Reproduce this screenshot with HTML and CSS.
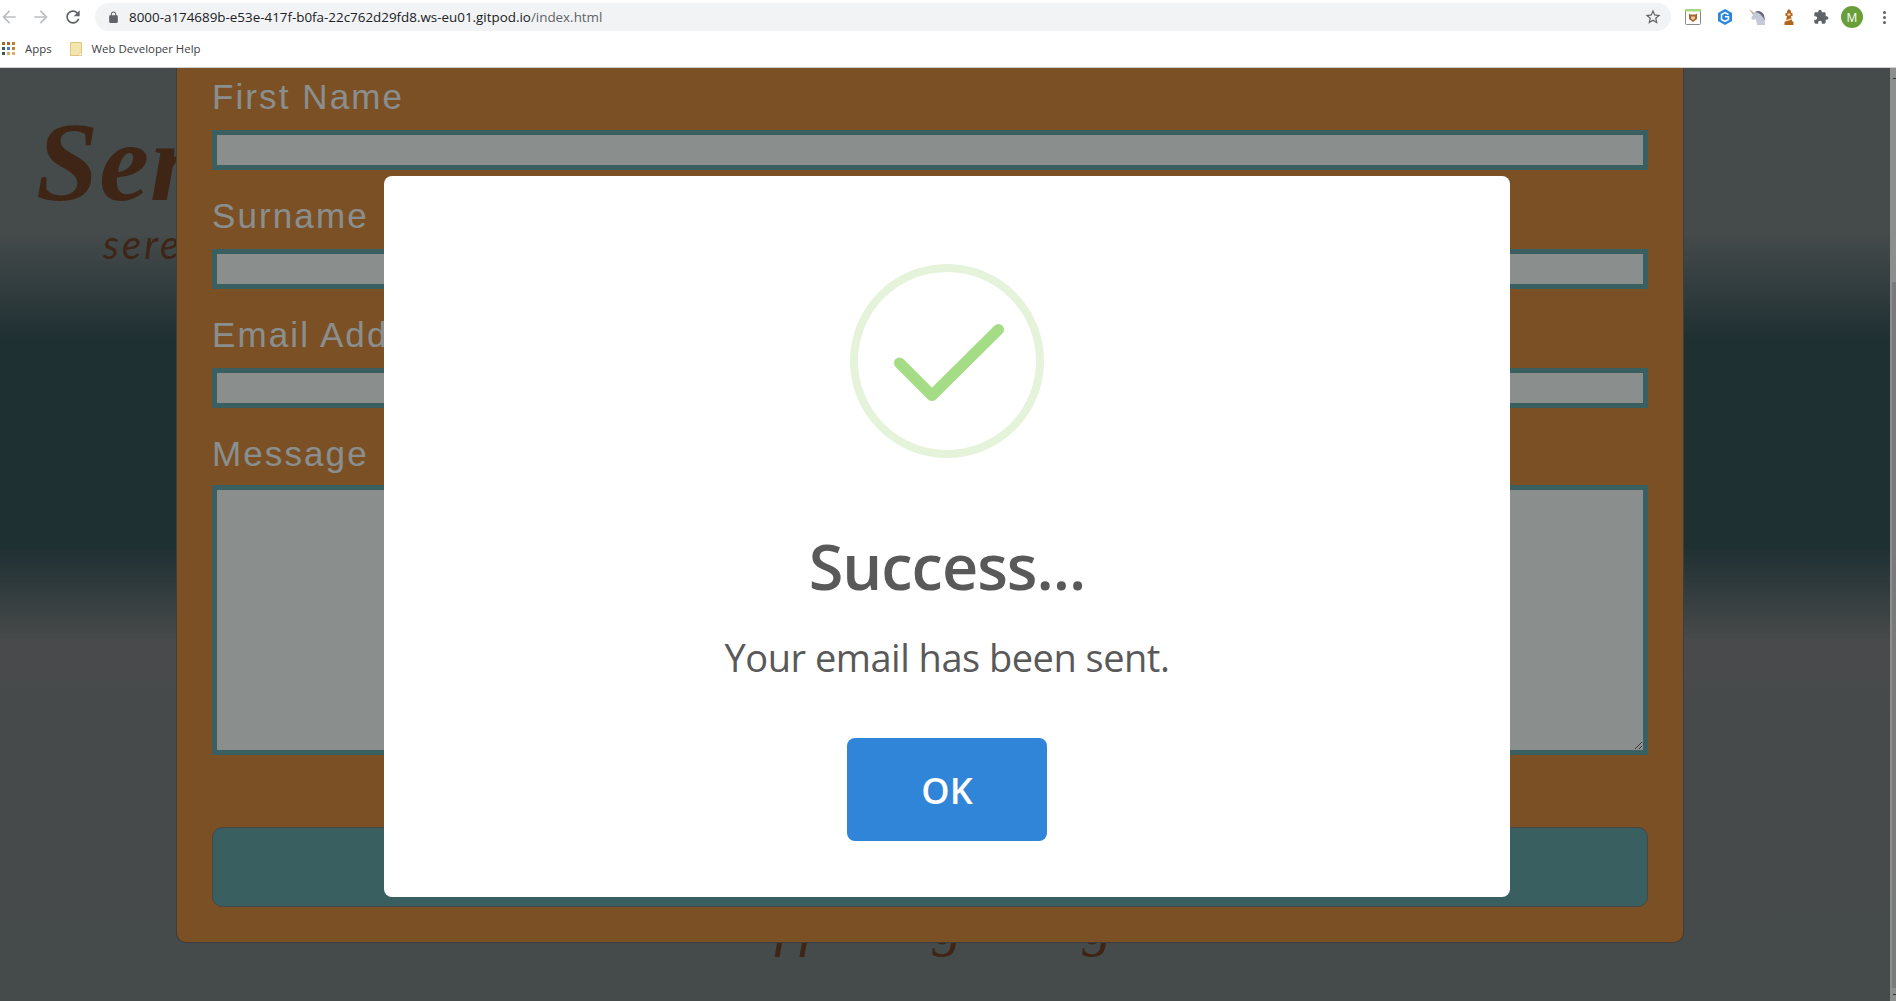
FILE: index.html
```html
<!DOCTYPE html>
<html lang="en">
<head>
<meta charset="utf-8">
<title>Send a message</title>
<link rel="stylesheet" href="styles.css">
</head>
<body>
<header class="chrome">
  <div class="toolbar">
    <svg class="nav nav-off nav-back" viewBox="0 0 24 24"><path d="M20 11H7.830l5.590-5.590L12 4l-8 8 8 8 1.410-1.410L7.830 13H20v-2z"/></svg>
    <svg class="nav nav-off" viewBox="0 0 24 24"><path d="M12 4l-1.410 1.410L16.170 11H4v2h12.170l-5.580 5.590L12 20l8-8z"/></svg>
    <svg class="nav nav-on" viewBox="0 0 24 24"><path d="M17.650 6.350C16.200 4.900 14.210 4 12 4c-4.420 0-7.990 3.580-7.990 8s3.570 8 7.990 8c3.730 0 6.840-2.550 7.730-6h-2.080c-.82 2.330-3.040 4-5.650 4-3.310 0-6-2.690-6-6s2.690-6 6-6c1.660 0 3.140.69 4.220 1.780L13 11h7V4l-2.350 2.350z"/></svg>
    <div class="omnibox">
      <svg class="lock" viewBox="0 0 24 24"><path d="M18 8h-1V6c0-2.760-2.240-5-5-5S7 3.240 7 6v2H6c-1.100 0-2 .9-2 2v10c0 1.100.9 2 2 2h12c1.100 0 2-.9 2-2V10c0-1.100-.9-2-2-2zm-2.900 0H8.900V6c0-1.710 1.390-3.100 3.100-3.100 1.710 0 3.100 1.390 3.100 3.100v2z"/></svg>
      <span class="url">8000-a174689b-e53e-417f-b0fa-22c762d29fd8.ws-eu01.gitpod.io<span class="url-path">/index.html</span></span>
      <svg class="star" viewBox="0 0 24 24"><path d="M22 9.240l-7.190-.620L12 2 9.190 8.630 2 9.240l5.460 4.730L5.820 21 12 17.270 18.180 21l-1.630-7.030L22 9.240zM12 15.400l-3.760 2.270 1-4.280-3.320-2.880 4.380-.380L12 6.100l1.710 4.040 4.380.380-3.320 2.880 1 4.280L12 15.400z"/></svg>
    </div>
    <div class="extensions">
      <svg class="ext" viewBox="0 0 16 16"><rect x="0.500" y="1" width="15" height="14.500" rx="1" fill="#fff" stroke="#8a8a8a"/><rect x="0" y="0" width="16" height="2.500" fill="#a6d97f"/><path d="M4 4.500l1.500 1h5l1.500-1v5.500L8 13 4 10z" fill="#a8662c"/><path d="M6 7.500h4v2L8 11 6 9.500z" fill="#e8c9a0"/></svg>
      <svg class="ext" viewBox="0 0 16 16"><path d="M8 0l7 4v8l-7 4-7-4V4z" fill="#2b86dc"/><path d="M11.500 5.500L8 3.500 4.500 5.500v5L8 12.500l3.500-2V7.800H8" fill="none" stroke="#fff" stroke-width="1.500"/></svg>
      <svg class="ext" viewBox="0 0 16 16"><path d="M0 0l5 4C7 2 11 2 13 4c2 2 3 6 3 12H8L7 10 4 11 2 9l2-3z" fill="#c3c9d6"/><path d="M0 0l5 4-1 1z" fill="#c9a56f"/><path d="M6 3c3-2 7-1 9 3l1 6c-2-4-4-8-10-9z" fill="#6d6380"/></svg>
      <svg class="ext" viewBox="0 0 16 16"><path d="M8 0l2 2v2h1.500v3H10l1 5 1.500 1v3h-9v-3L5 12l1-5H4.500V4H6V2z" fill="#b2651f"/><rect x="6.500" y="4.500" width="3" height="2" fill="#f4d9b0"/><path d="M5 11l6-2v1.500l-6 2z" fill="#f4d9b0"/></svg>
      <svg class="ext ext-puzzle" viewBox="0 0 24 24"><path d="M20.500 11H19V7c0-1.100-.9-2-2-2h-4V3.500C13 2.120 11.880 1 10.500 1S8 2.120 8 3.500V5H4c-1.100 0-1.990.9-1.990 2v3.800H3.500c1.490 0 2.700 1.210 2.700 2.700s-1.210 2.700-2.700 2.700H2V20c0 1.100.9 2 2 2h3.800v-1.500c0-1.490 1.210-2.700 2.700-2.700 1.490 0 2.700 1.210 2.700 2.700V22H17c1.100 0 2-.9 2-2v-4h1.500c1.380 0 2.500-1.120 2.500-2.500S21.880 11 20.500 11z"/></svg>
      <div class="avatar">M</div>
      <div class="menu-dots"><i></i><i></i><i></i></div>
    </div>
  </div>
  <div class="bookmarks">
    <div class="apps-grid">
      <i class="c1"></i><i class="c1"></i><i class="c2"></i>
      <i class="c3"></i><i class="c4"></i><i class="c2"></i>
      <i class="c3"></i><i class="c5"></i><i class="c5"></i>
    </div>
    <span class="bm-text bm-apps">Apps</span>
    <svg class="folder" viewBox="0 0 12 14"><path d="M.5.500h11v13H.5z" fill="#f2e6ad" stroke="#e0c581"/><path d="M9 11h2.500v2.500H9z" fill="#fff" stroke="#e0c581" stroke-width=".6"/></svg>
    <span class="bm-text">Web Developer Help</span>
  </div>
</header>

<div class="viewport">
  <main class="page">
    <div class="backdrop-text">
      <h1 class="page-title">Send</h1>
      <p class="page-sub">serenity</p>
    </div>
    <p class="page-foot"><span class="foot-ff">ff</span><span class="foot-g1">g</span><span class="foot-g2">g</span></p>

    <form class="panel">
      <label class="field-label" for="first">First Name</label>
      <input class="field-input" id="first" type="text">
      <label class="field-label" for="last">Surname</label>
      <input class="field-input" id="last" type="text">
      <label class="field-label" for="email">Email Address</label>
      <input class="field-input" id="email" type="email">
      <label class="field-label" for="msg">Message</label>
      <textarea class="field-input field-area" id="msg"></textarea>
      <button class="send" type="button">Send</button>
    </form>

    <div class="overlay">
      <div class="modal">
        <svg class="check" viewBox="0 0 194 194">
          <circle cx="97" cy="97" r="93" fill="none" stroke="#e4f3da" stroke-width="8"/>
          <path d="M49.500 99L82 131.500 148.500 65.500" fill="none" stroke="#a5dc86" stroke-width="11" stroke-linecap="round" stroke-linejoin="round"/>
        </svg>
        <h2 class="modal-title">Success...</h2>
        <p class="modal-text">Your email has been sent.</p>
        <button class="modal-ok" type="button">OK</button>
      </div>
    </div>
  </main>
  <div class="scrollbar">
    <i class="sb-arrow"></i>
    <div class="sb-thumb"></div>
    <i class="sb-arrow sb-arrow-end"></i>
  </div>
</div>
</body>
</html>
```
FILE: styles.css
```css
* { box-sizing: border-box; }
html, body { margin: 0; height: 100%; }
body {
  display: flex;
  flex-direction: column;
  height: 1001px;
  overflow: hidden;
  background: #fff;
  font-family: "Open Sans", "Noto Sans", sans-serif;
}

/* browser chrome */
.chrome {
  height: 68px;
  flex: none;
  background: #fff;
  border-bottom: 1px solid #d0d0d0;
}
.toolbar {
  height: 34px;
  display: flex;
  align-items: center;
}
.nav { width: 20px; height: 20px; flex: none; margin-left: 12px; }
.nav-off { fill: #bcbec1; }
.nav-back { margin-left: -1px; }
.nav-on { fill: #5f6368; }
.omnibox {
  margin-left: 12px;
  width: 1576px;
  height: 28px;
  flex: none;
  display: flex;
  align-items: center;
  background: #f1f3f4;
  border-radius: 14px;
  padding-left: 11.500px;
}
.lock { width: 13px; height: 13px; fill: #5f6368; flex: none; }
.url {
  margin-left: 9.500px;
  font-size: 13.400px;
  color: #202124;
  white-space: nowrap;
  flex: 1;
}
.url-path { color: #5f6368; }
.star { width: 18px; height: 18px; fill: #5f6368; flex: none; margin-right: 9px; }
.extensions { display: flex; align-items: center; flex: none; margin-left: 14px; }
.ext { width: 16px; height: 16px; flex: none; margin-right: 16px; }
.ext-puzzle { fill: #5f6368; margin-right: 12px; }
.avatar {
  width: 22px;
  height: 22px;
  border-radius: 50%;
  background: #689f38;
  color: #fff;
  font-size: 12px;
  display: flex;
  align-items: center;
  justify-content: center;
  flex: none;
}
.menu-dots { display: flex; flex-direction: column; gap: 2px; margin-left: 19.500px; flex: none; }
.menu-dots i { width: 3px; height: 3px; border-radius: 50%; background: #5f6368; display: block; }

.bookmarks {
  height: 33px;
  display: flex;
  align-items: center;
  padding: 0 0 4px 2px;
}
.apps-grid {
  display: grid;
  grid-template-columns: repeat(3, 3px);
  grid-auto-rows: 3px;
  gap: 2px;
  width: 13px;
  flex: none;
}
.apps-grid i { display: block; }
.c1 { background: #a8662c; }
.c2 { background: #c47f36; }
.c3 { background: #3c5a5c; }
.c4 { background: #3a82cc; }
.c5 { background: #e0a860; }
.bm-text { font-size: 11.400px; color: #3c4043; white-space: nowrap; }
.bm-apps { margin-left: 10px; }
.folder { width: 12px; height: 14px; margin: 0 10px 0 18px; flex: none; }

/* page */
.viewport { flex: 1; display: flex; min-height: 0; }
.page {
  flex: 1;
  position: relative;
  overflow: hidden;
  padding-left: 176px;
  background: linear-gradient(to bottom,
    #737c7d 0, #737c7d 167px,
    #345055 272px, #345055 479px,
    #787c7d 572px, #737c7d 933px);
}
.backdrop-text {
  position: absolute;
  left: 36px;
  top: 38px;
  font-family: "Liberation Serif", serif;
  color: #693f25;
}
.page-title {
  margin: 0;
  font-size: 112px;
  font-style: italic;
  font-weight: 700;
  letter-spacing: 1px;
  line-height: 112px;
}
.page-sub {
  margin: 2px 0 0 67px;
  font-family: "Lato", sans-serif;
  font-size: 40px;
  font-weight: 400;
  font-style: italic;
  letter-spacing: 3px;
}
.page-foot {
  position: absolute;
  left: 774px;
  top: 822px;
  margin: 0;
  display: flex;
  font-family: "Liberation Serif", serif;
  font-style: italic;
  font-size: 60px;
  color: #693f25;
}
.foot-ff { letter-spacing: 8px; }
.foot-g1 { margin-left: 109px; }
.foot-g2 { margin-left: 120px; }

.panel {
  position: relative;
  width: 1508px;
  height: 875px;
  padding: 9px 35px 0;
  background: #cd853f;
  border: 1px solid #666;
  border-top: 0;
  border-radius: 0 0 10px 10px;
}
.field-label {
  display: block;
  height: 40px;
  line-height: 40px;
  margin-bottom: 13px;
  font-family: "Liberation Sans", sans-serif;
  font-size: 35px;
  letter-spacing: 2.100px;
  color: #e6eeed;
}
.field-input {
  display: block;
  width: 100%;
  height: 40px;
  margin: 0 0 26px;
  border: 5px solid #5f9ea0;
  border-radius: 0;
  background: #e6eeed;
  outline: 0;
}
.field-area { height: 270px; margin-top: -2px; margin-bottom: 72px; resize: both; }
.send {
  display: block;
  width: 100%;
  height: 80px;
  background: #5f9ea0;
  border: 1px solid #777;
  border-radius: 10px;
  color: #e6eeed;
  font-size: 30px;
}

/* dialog */
.overlay {
  position: absolute;
  inset: 0;
  background: rgba(0, 0, 0, .4);
  display: flex;
  justify-content: center;
  align-items: flex-start;
  padding: 108px 0 0 4px;
}
.modal {
  width: 1126px;
  height: 721px;
  background: #fff;
  border-radius: 8px;
  padding-top: 88px;
  display: flex;
  flex-direction: column;
  align-items: center;
  color: #595959;
}
.check { width: 194px; height: 194px; flex: none; }
.modal-title {
  margin: 68px 0 0;
  font-size: 63px;
  letter-spacing: -1px;
  line-height: 80px;
  font-weight: 600;
}
.modal-text {
  margin: 26px 0 0;
  font-size: 38px;
  letter-spacing: -.5px;
  line-height: 50px;
}
.modal-ok {
  margin-top: 56px;
  width: 200px;
  height: 103px;
  border: 0;
  padding: 2px 0 0;
  border-radius: 8px;
  background: #3085d8;
  color: #fff;
  font-family: inherit;
  font-size: 36px;
  font-weight: 600;
}

/* scrollbar */
.scrollbar {
  width: 6px;
  flex: none;
  background: #8e8e8e;
  display: flex;
  flex-direction: column;
  position: relative;
}
.sb-thumb {
  margin: 214px 0 0 2px;
  width: 4px;
  height: 706px;
  background: #7a7a7a;
}
.sb-arrow { position: absolute; right: 0; top: 10px; width: 3px; height: 1px; background: #333; }
.sb-arrow-end { top: auto; bottom: 6px; }
```
